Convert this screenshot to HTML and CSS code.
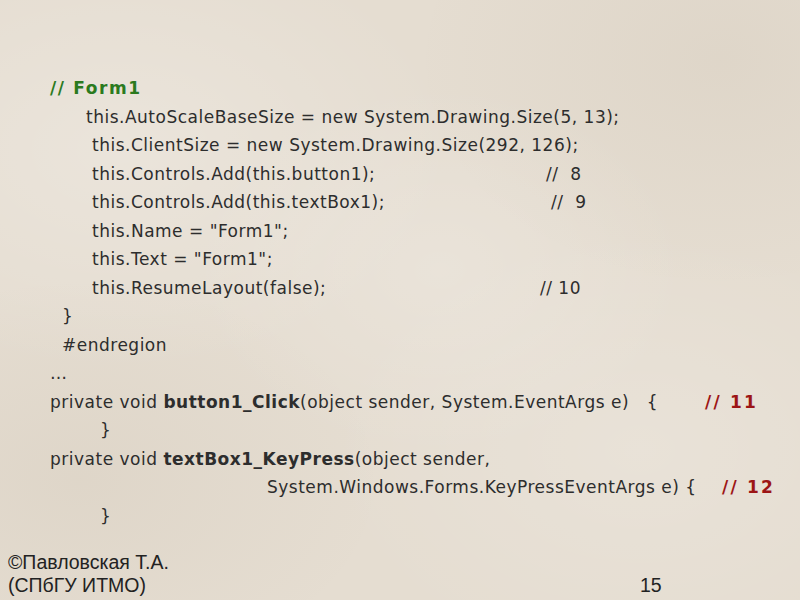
FILE: index.html
```html
<!DOCTYPE html>
<html>
<head>
<meta charset="utf-8">
<link rel="stylesheet" href="styles.css">
</head>
<body>
<div class="slide">
  <div class="code">
    <div class="line i0"><span class="gc">// Form1</span></div>
    <div class="line i1">this.AutoScaleBaseSize = new System.Drawing.Size(5, 13);</div>
    <div class="line i2">this.ClientSize = new System.Drawing.Size(292, 126);</div>
    <div class="line i2"><span class="w w8">this.Controls.Add(this.button1);</span>//  8</div>
    <div class="line i2"><span class="w w9">this.Controls.Add(this.textBox1);</span>//  9</div>
    <div class="line i2">this.Name = "Form1";</div>
    <div class="line i2">this.Text = "Form1";</div>
    <div class="line i2"><span class="w w10">this.ResumeLayout(false);</span>// 10</div>
    <div class="line i3">}</div>
    <div class="line i3">#endregion</div>
    <div class="line i0 dots">…</div>
    <div class="line i0"><span class="w w11">private void <b>button1_Click</b>(object sender, System.EventArgs e)   {</span><span class="rc">// 11</span></div>
    <div class="line i4">}</div>
    <div class="line i0">private void <b>textBox1_KeyPress</b>(object sender,</div>
    <div class="line i5"><span class="w w12">System.Windows.Forms.KeyPressEventArgs e) {</span><span class="rc">// 12</span></div>
    <div class="line i4">}</div>
  </div>
  <div class="footer">
    <div class="author">©Павловская Т.А.<br>(СПбГУ ИТМО)</div>
    <div class="page">15</div>
  </div>
</div>
</body>
</html>
```
FILE: styles.css
```css
html, body {
  margin: 0;
  padding: 0;
}
body {
  width: 800px;
  height: 600px;
  overflow: hidden;
  background: #e6dfd3;
}
.slide {
  width: 800px;
  height: 600px;
  display: flex;
  flex-direction: column;
  background:
    radial-gradient(ellipse at 15% 25%, rgba(255,255,255,0.22), transparent 35%),
    radial-gradient(ellipse at 55% 45%, rgba(255,255,255,0.18), transparent 40%),
    radial-gradient(ellipse at 80% 75%, rgba(255,255,255,0.15), transparent 35%),
    radial-gradient(ellipse at 10% 80%, rgba(120,100,70,0.06), transparent 30%),
    radial-gradient(ellipse at 90% 10%, rgba(120,100,70,0.06), transparent 30%),
    #e5ddd1;
}
.code {
  padding-top: 74px;
  font-family: "DejaVu Sans", Verdana, sans-serif;
  font-size: 17px;
  letter-spacing: 0.5px;
  color: #2d2d2d;
  line-height: 28.5px;
}
.line {
  white-space: pre;
  height: 28.5px;
}
.i0 { padding-left: 50px; }
.i1 { padding-left: 86px; }
.i2 { padding-left: 92px; }
.i3 { padding-left: 62px; }
.i4 { padding-left: 100px; }
.i5 { padding-left: 267px; }
.gc {
  color: #2b7a1e;
  font-weight: bold;
  letter-spacing: 1.6px;
}
.rc {
  color: #9c1515;
  font-weight: bold;
  letter-spacing: 2.2px;
}
.w { display: inline-block; }
.w8 { width: 454px; }
.w9 { width: 459px; }
.w10 { width: 448px; }
.w11 { width: 655px; }
.w12 { width: 455px; }
.footer {
  margin-top: auto;
  padding: 0 0 3px 8px;
  display: flex;
  align-items: flex-end;
  font-family: "Liberation Sans", Arial, sans-serif;
  font-size: 19.5px;
  line-height: 23px;
  color: #222;
}
.author { width: 632px; }
```
